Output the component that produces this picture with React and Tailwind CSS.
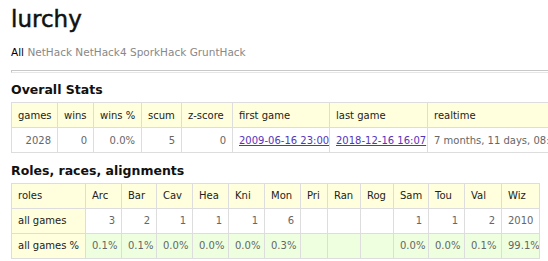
const font = { fontFamily: '"DejaVu Sans", Verdana, sans-serif' }

const roles = ["Arc", "Bar", "Cav", "Hea", "Kni", "Mon", "Pri", "Ran", "Rog", "Sam", "Tou", "Val", "Wiz"]
const roleWidths = ["w-[36px]", "w-[35px]", "w-[36px]", "w-[36px]", "w-[36px]", "w-[36px]", "w-[27px]", "w-[33px]", "w-[33px]", "w-[35px]", "w-[36px]", "w-[37px]", "w-[38px]"]
const counts = ["3", "2", "1", "1", "1", "6", "", "", "", "1", "1", "2", "2010"]
const pcts = ["0.1%", "0.1%", "0.0%", "0.0%", "0.0%", "0.3%", "", "", "", "0.0%", "0.0%", "0.1%", "99.1%"]

const cell = "border border-[#dddddd] px-[6px] h-[25px] whitespace-nowrap overflow-hidden"
const th = `${cell} bg-[#ffffdd] text-[#222] font-normal text-left`
const num = `${cell} text-[#666] text-right`
const txt = `${cell} text-[#666] text-left`

export default function App() {
  return (
    <div className="w-[548px] h-[261px] overflow-hidden bg-white pl-[11px] text-[10px]" style={font}>
      <h1 className="text-[23px] text-[#111] leading-none pt-[8px] [-webkit-text-stroke:0.5px_#111]">lurchy</h1>
      <div className="mt-[16px] leading-none text-[10.5px]">
        <span className="text-black">All</span>{" "}
        <span className="text-[#888]">NetHack NetHack4 SporkHack GruntHack</span>
      </div>
      <div className="mt-[12px] h-[3px] border border-[#c8c8c8] border-b-[#e6e6e6] w-[600px]" />

      <h2 className="mt-[11px] text-[12.5px] font-bold text-[#111] leading-none">Overall Stats</h2>
      <table className="mt-[6px] border-collapse table-fixed w-[640px]">
        <thead>
          <tr>
            <th className={`${th} w-[46px]`}>games</th>
            <th className={`${th} w-[36px]`}>wins</th>
            <th className={`${th} w-[48px]`}>wins %</th>
            <th className={`${th} w-[40px]`}>scum</th>
            <th className={`${th} w-[51px]`}>z-score</th>
            <th className={`${th} w-[97px]`}>first game</th>
            <th className={`${th} w-[98px]`}>last game</th>
            <th className={`${th} w-[224px]`}>realtime</th>
          </tr>
        </thead>
        <tbody>
          <tr>
            <td className={num}>2028</td>
            <td className={num}>0</td>
            <td className={num}>0.0%</td>
            <td className={num}>5</td>
            <td className={num}>0</td>
            <td className={txt}>
              <a className="text-[#5533bb] underline">2009-06-16 23:00</a>
            </td>
            <td className={txt}>
              <a className="text-[#5533bb] underline">2018-12-16 16:07</a>
            </td>
            <td className={txt}>7 months, 11 days, 08:54:12</td>
          </tr>
        </tbody>
      </table>

      <h2 className="mt-[12px] text-[12.5px] font-bold text-[#111] leading-none">Roles, races, alignments</h2>
      <table className="mt-[5px] border-collapse table-fixed w-[528px]">
        <thead>
          <tr>
            <th className={`${th} w-[74px]`}>roles</th>
            {roles.map((r, i) => (
              <th key={r} className={`${th} ${roleWidths[i]}`}>{r}</th>
            ))}
          </tr>
        </thead>
        <tbody>
          <tr>
            <th className={th}>all games</th>
            {counts.map((c, i) => (
              <td key={i} className={num}>{c}</td>
            ))}
          </tr>
          <tr>
            <th className={th}>all games %</th>
            {pcts.map((p, i) => (
              <td key={i} className={`${num} bg-[#eeffe0]`}>{p}</td>
            ))}
          </tr>
        </tbody>
      </table>
    </div>
  )
}
